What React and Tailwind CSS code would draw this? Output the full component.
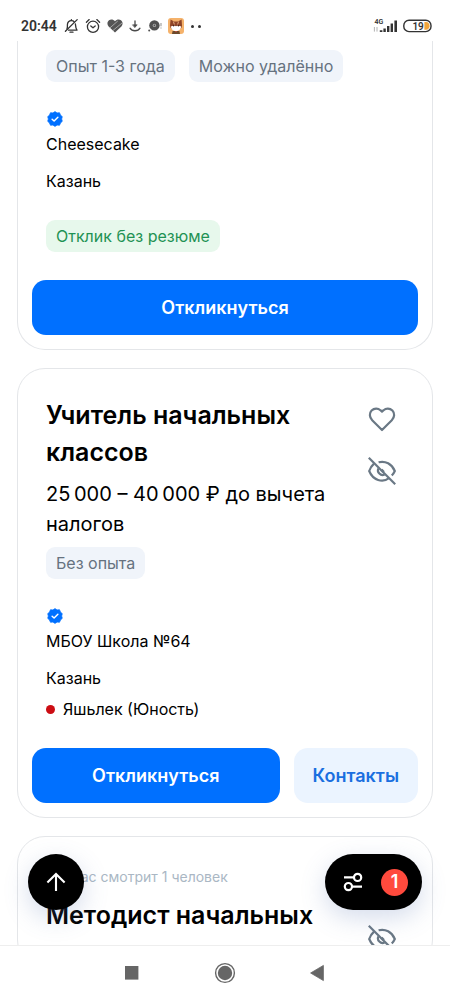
import React from "react";

function BellOffIcon() {
  return (
    <svg width="15" height="16" viewBox="0 0 15 16" fill="none" stroke="#333" strokeWidth="1.3" strokeLinecap="round" strokeLinejoin="round">
      <path d="M3 10.8C3.6 9.4 3.4 8 3.4 6.8C3.4 4.2 5 2.6 7.4 2.6C8.6 2.6 9.6 3 10.2 3.8M11.4 6C11.6 8.5 11.6 10 13 12.2H4.6" />
      <path d="M6 14.2H9M7.4 1.6V2.4M13.2 1.6L1.4 13.2" />
    </svg>
  );
}

function AlarmIcon() {
  return (
    <svg width="16" height="16" viewBox="0 0 16 16" fill="none" stroke="#333" strokeWidth="1.3" strokeLinecap="round" strokeLinejoin="round">
      <circle cx="8" cy="8.8" r="5.6" />
      <path d="M1.4 4.2L4.2 1.6M14.6 4.2L11.8 1.6M5.8 8L8 9.8L10.2 8" />
    </svg>
  );
}

function StripedHeartIcon() {
  return (
    <svg width="16" height="14" viewBox="0 0 16 14">
      <path d="M8 13.6L1.6 7.4C-.2 5.4 .2 2.6 2 1.2C3.8 -.1 6.4 .2 8 2.2C9.6 .2 12.2 -.1 14 1.2C15.8 2.6 16.2 5.4 14.4 7.4Z" fill="#555" />
      <path d="M2.8 9L10.8 2M5.8 11.6L15 4" stroke="#c8c8c8" strokeWidth=".7" />
    </svg>
  );
}

function DownloadIcon() {
  return (
    <svg width="12" height="12" viewBox="0 0 12 12" fill="none" stroke="#4a4a4a" strokeWidth="1.3" strokeLinecap="round">
      <path d="M6 1V6M1 8.2C3 11.6 9 11.6 11 8.2" />
      <path d="M3.8 4.8H8.2L6 7.4Z" fill="#4a4a4a" strokeWidth=".6" />
    </svg>
  );
}

function DiscIcon() {
  return (
    <svg width="14" height="12" viewBox="0 0 14 12">
      <circle cx="6.4" cy="5.4" r="5.2" fill="#505050" />
      <circle cx="6.4" cy="5.4" r="1.7" fill="#aaa" />
      <circle cx="6.4" cy="5.4" r=".8" fill="#505050" />
      <circle cx="1.2" cy="10.6" r="1" fill="#505050" />
      <path d="M13 3V6.2M13 7.6V8.6" stroke="#999" strokeWidth="1.1" />
    </svg>
  );
}

function FoxIcon() {
  return (
    <svg width="16" height="16" viewBox="0 0 16 16">
      <rect width="16" height="16" rx="3" fill="#f5b26b" />
      <path d="M2.6 1.6L6 3.4H10L13.6 1.4L14 7.6C14 10.4 11.4 12.2 8 12.2C4.6 12.2 2 10.4 2 7.6Z" fill="#8f4426" />
      <path d="M2.8 8.6C4.2 8 5.6 7.4 8 8.2C10.4 7.4 11.8 8 13.2 8.6C12.8 11.6 10.8 13.2 8 13.2C5.2 13.2 3.2 11.6 2.8 8.6Z" fill="#fff" />
      <path d="M5.4 3.6L6.4 6.4M10.6 3.6L9.6 6.4" stroke="#e9b48c" strokeWidth=".9" />
      <circle cx="5.6" cy="7.8" r=".7" fill="#3a1c14" />
      <circle cx="10.4" cy="7.8" r=".7" fill="#3a1c14" />
      <path d="M4.6 13H11.4L12 16H4Z" fill="#6b4a2c" />
      <path d="M7 13H9L8 14.4Z" fill="#e0533d" />
    </svg>
  );
}

function SignalIcon() {
  return (
    <svg width="25" height="14" viewBox="0 0 25 14">
      <text x="1.6" y="5.4" fontSize="7" fontWeight="600" fontFamily="Roboto, sans-serif" fill="#333">4G</text>
      <path d="M1.4 8V12.6M4 8V12.6" stroke="#aaa" strokeWidth=".9" />
      <path d="M6.8 13V11.2H9.4V13ZM10.4 13V9.4H12.8V13ZM14 13V7H16.4V13ZM17.6 13V4.4H20V13ZM21.4 13V1.4H24V13Z" fill="#333" />
    </svg>
  );
}

function BatteryIcon() {
  return (
    <svg width="29" height="14" viewBox="0 0 29 14">
      <rect x=".8" y="1.2" width="27.2" height="11.4" rx="5.2" fill="#fff" stroke="#333" strokeWidth="1.4" />
      <path d="M21.4 3H23C27.8 3 27.8 10.8 23 10.8H21.4Z" fill="#f2a63c" />
      <text x="9.4" y="10.5" fontSize="10" fontWeight="600" fontFamily="Roboto, sans-serif" fill="#333">19</text>
    </svg>
  );
}

function StatusBar() {
  return (
    <header className="flex h-[41px] shrink-0 items-center justify-between bg-white pt-[11px] pr-[18px] pl-[21px]">
      <div className="flex items-center gap-[6px]">
        <span className="pr-px font-[Roboto,sans-serif] text-[14px] leading-4 font-semibold text-[#333]">20:44</span>
        <BellOffIcon />
        <AlarmIcon />
        <StripedHeartIcon />
        <DownloadIcon />
        <span className="pl-px"><DiscIcon /></span>
        <FoxIcon />
        <span className="flex gap-1 pl-px">
          <span className="size-[3px] rounded-full bg-[#333]" />
          <span className="size-[3px] rounded-full bg-[#333]" />
        </span>
      </div>
      <div className="flex items-center gap-[5px]">
        <SignalIcon />
        <BatteryIcon />
      </div>
    </header>
  );
}

function VerifiedIcon() {
  return (
    <svg width="18" height="18" viewBox="0 0 20 20" aria-label="Проверенный работодатель">
      <path d="M10 1.8L12.3 3.2L15 3L16.1 5.5L18.1 7.6L17.4 10L18.1 12.6L16.1 14.5L15 17L12.3 16.8L10 18.2L7.7 16.8L5 17L3.9 14.5L1.9 12.6L2.6 10L1.9 7.6L3.9 5.5L5 3L7.7 3.2Z" fill="#0070ff" stroke="#0070ff" strokeWidth=".8" strokeLinejoin="round" />
      <path d="M6.8 10.2L9 12.3L13.2 8.1" fill="none" stroke="#fff" strokeWidth="1.6" strokeLinecap="round" strokeLinejoin="round" />
    </svg>
  );
}

function HeartIcon() {
  return (
    <svg width="28" height="28" viewBox="0 0 28 28" fill="none" stroke="#6a7885" strokeWidth="2.2" strokeLinejoin="round">
      <path d="M14 25L4.2 15.2C1.2 12.2 1.2 8 3.6 5.5C6.2 3 10 3 12.4 5.2L14 6.6L15.6 5.2C18 3 21.8 3 24.4 5.5C26.8 8 26.8 12.2 23.8 15.2Z" />
    </svg>
  );
}

function EyeOffIcon() {
  return (
    <svg width="28" height="28" viewBox="0 0 28 28" fill="none" stroke="#6a7885" strokeWidth="2.2">
      <path d="M.8 .8L27.2 27.2" />
      <path d="M10.6 5.3C17.4 3.4 23.8 7 26.8 14C26 15.8 25 17.3 23.8 18.6" />
      <path d="M6 6.6C4 8.4 2.3 10.9 1.2 14C5 23.4 14.6 26 21 21.2" />
      <path d="M10.4 11.4C8.6 15.2 12.6 19.4 16.6 17.6" />
      <path d="M13.6 12.6L16 15" />
    </svg>
  );
}

function Tag({ tone = "gray", children }) {
  const colors = tone === "green" ? "bg-[#e7f8ec] text-[#1f9254]" : "bg-[#f0f4fa] text-[#66727f]";
  return <span className={`rounded-[9px] px-[10px] py-1 text-[16px] leading-6 ${colors}`}>{children}</span>;
}

function Employer({ name, city, metro }) {
  return (
    <div className="px-[14px] text-[16px] leading-6 text-black">
      <VerifiedIcon />
      <p className="mt-1">{name}</p>
      <p className="mt-[13px]">{city}</p>
      {metro && (
        <p className="mt-[7px] flex items-center gap-2">
          <span className="size-[9px] rounded-full bg-[#cc0d13]" />
          {metro}
        </p>
      )}
    </div>
  );
}

function PrimaryButton() {
  return (
    <button type="button" className="h-[55px] flex-1 rounded-[14px] bg-[#0070ff] text-[18px] font-semibold text-white">
      Откликнуться
    </button>
  );
}

function CardActions() {
  return (
    <div className="flex flex-col gap-6">
      <button type="button" aria-label="В избранное"><HeartIcon /></button>
      <button type="button" aria-label="Скрыть вакансию"><EyeOffIcon /></button>
    </div>
  );
}

export default function App() {
  return (
    <div className="relative flex h-screen flex-col overflow-hidden bg-white font-[Inter,'Noto_Sans',sans-serif]">
      <StatusBar />

      <main className="flex min-h-0 flex-1 flex-col gap-[18px] overflow-hidden px-[17px]">
        <article className="shrink-0 rounded-b-[28px] border border-t-0 border-[#e4e6e9] px-[14px] pt-[9px] pb-[14px]">
          <div className="flex gap-[14px] px-[14px]">
            <Tag>Опыт 1-3 года</Tag>
            <Tag>Можно удалённо</Tag>
          </div>
          <div className="mt-7">
            <Employer name="Cheesecake" city="Казань" />
          </div>
          <div className="mt-[27px] flex px-[14px]">
            <Tag tone="green">Отклик без резюме</Tag>
          </div>
          <div className="mt-7 flex">
            <PrimaryButton />
          </div>
        </article>

        <article className="shrink-0 rounded-[28px] border border-[#e4e6e9] px-[14px] pt-[28px] pb-[14px]">
          <div className="flex justify-between gap-4 pr-[22px] pl-[14px]">
            <div className="min-w-0 flex-1">
              <h2 className="text-[25px] leading-[37px] font-semibold text-black">Учитель начальных классов</h2>
              <p className="mt-2 text-[20px] leading-[30px] text-black">25&#8201;000 – 40&#8201;000 ₽ до вычета налогов</p>
            </div>
            <div className="mt-2">
              <CardActions />
            </div>
          </div>
          <div className="mt-2 flex px-[14px]">
            <Tag>Без опыта</Tag>
          </div>
          <div className="mt-7">
            <Employer name="МБОУ Школа №64" city="Казань" metro="Яшьлек (Юность)" />
          </div>
          <div className="mt-[27px] flex gap-[14px]">
            <PrimaryButton />
            <button type="button" className="h-[55px] rounded-[14px] bg-[#ebf4ff] px-[19px] text-[18px] font-semibold text-[#1a6fe0]">
              Контакты
            </button>
          </div>
        </article>

        <article className="shrink-0 rounded-[28px] border border-[#e4e6e9] px-[14px] pt-[28px] pb-[14px]">
          <div className="flex justify-between gap-4 pr-[22px] pl-[14px]">
            <div className="min-w-0 flex-1">
              <p className="text-[14px] leading-6 text-[#aab7c4]">Сейчас смотрит 1 человек</p>
              <h2 className="mt-2 text-[25px] leading-[37px] font-semibold text-black">Методист начальных</h2>
            </div>
            <div className="mt-2">
              <CardActions />
            </div>
          </div>
        </article>
      </main>

      <div className="absolute inset-x-7 bottom-[90px] flex justify-between">
        <button type="button" aria-label="Наверх" className="flex size-14 items-center justify-center rounded-full bg-black shadow-[0_8px_24px_rgba(90,120,180,0.25)]">
          <svg width="20" height="20" viewBox="0 0 20 20" fill="none" stroke="#fff" strokeWidth="2.1">
            <path d="M10 19V2M1.4 10.6L10 2L18.6 10.6" />
          </svg>
        </button>
        <button type="button" aria-label="Фильтры" className="flex h-14 items-center gap-[18px] rounded-full bg-black pr-[14px] pl-[18px] shadow-[0_8px_24px_rgba(90,120,180,0.25)]">
          <svg width="20" height="20" viewBox="0 0 20 20" fill="none" stroke="#fff" strokeWidth="2.2">
            <circle cx="14.6" cy="5.4" r="3.6" />
            <circle cx="5.4" cy="14.6" r="3.6" />
            <path d="M1 5.4H11M9 14.6H19" />
          </svg>
          <span className="flex size-[27px] items-center justify-center rounded-full bg-[#ff4a3d] text-[18px] leading-6 font-semibold text-white">1</span>
        </button>
      </div>

      <nav className="flex h-[55px] shrink-0 items-center justify-center gap-[72px] border-t border-[#eeeeee] bg-white">
        <button type="button" aria-label="Недавние">
          <svg width="20" height="22" viewBox="0 0 20 22"><rect x="3" y="4" width="13.4" height="13.6" fill="#666" /></svg>
        </button>
        <button type="button" aria-label="Домой">
          <svg width="22" height="22" viewBox="0 0 22 22">
            <circle cx="11" cy="11" r="9.4" fill="none" stroke="#666" strokeWidth="1.4" />
            <circle cx="11" cy="11" r="7.2" fill="#666" />
          </svg>
        </button>
        <button type="button" aria-label="Назад">
          <svg width="20" height="22" viewBox="0 0 20 22"><path d="M2.6 11L15.4 3.4V18.6Z" fill="#666" stroke="#666" strokeWidth=".8" strokeLinejoin="round" /></svg>
        </button>
      </nav>
    </div>
  );
}
